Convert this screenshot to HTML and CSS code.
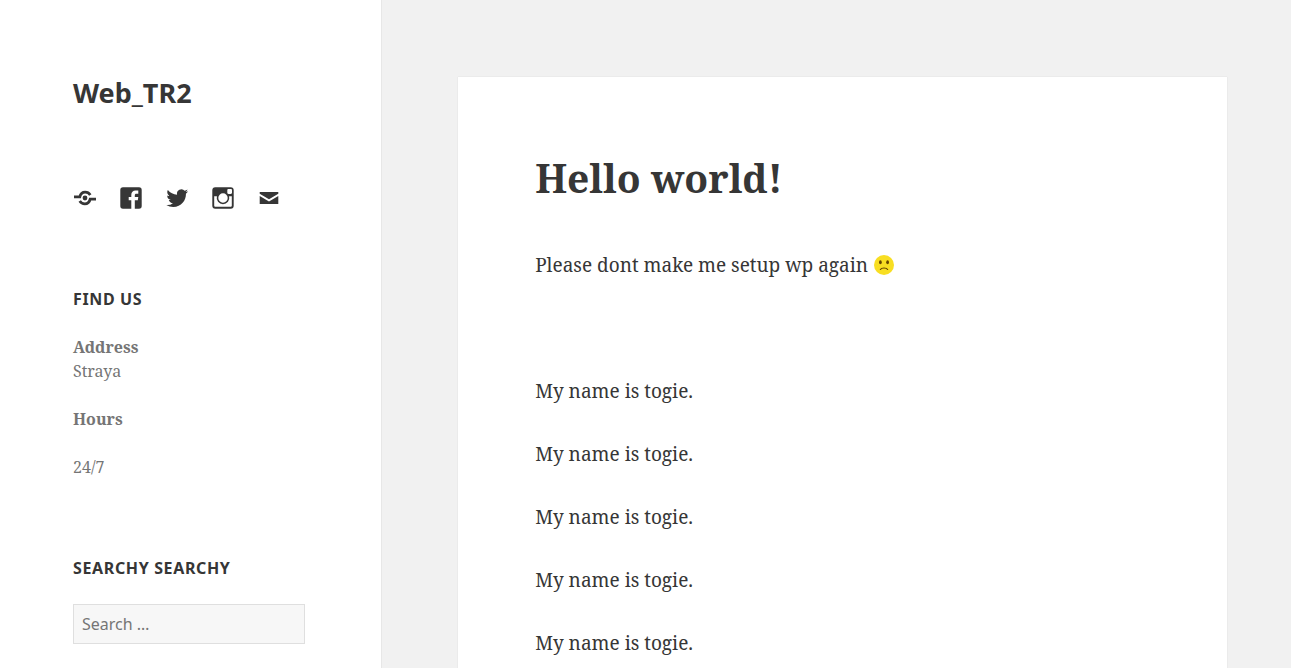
FILE: index.html
```html
<!DOCTYPE html>
<html lang="en">
<head>
<meta charset="utf-8">
<meta name="viewport" content="width=device-width, initial-scale=1">
<title>Web_TR2</title>
<link rel="stylesheet" href="styles.css">
</head>
<body>
<div class="site">
  <aside class="sidebar">
    <h1 class="site-title"><a href="#">Web_TR2</a></h1>
    <nav class="social" aria-label="Social links">
      <a href="#" aria-label="Website"><svg viewBox="0 0 24 24"><circle cx="12" cy="12" r="2.400"/><path d="M1 10.900h5.800C7.500 8 9.600 6.200 12.200 6.200c2.200 0 3.900 1 5.100 2.800M23 13.100h-5.800c-.7 2.900-2.800 4.700-5.400 4.700-2.200 0-3.900-1-5.100-2.800" fill="none" stroke="#363636" stroke-width="2.800"/></svg></a>
      <a href="#" aria-label="Facebook"><svg viewBox="0 0 24 24"><path d="M20 1.300H4A2.700 2.700 0 0 0 1.300 4v16A2.700 2.700 0 0 0 4 22.700h8.300v-8.400H9.700v-3.200h2.600V9c0-2.900 1.600-4.500 4.300-4.500h2.700v3.200h-1.800c-1.300 0-1.700.6-1.700 1.700v1.700h3.500l-.5 3.200h-3v8.400H20a2.700 2.700 0 0 0 2.700-2.700V4A2.700 2.700 0 0 0 20 1.300z"/></svg></a>
      <a href="#" aria-label="Twitter"><svg viewBox="1 1 22 22"><path d="M22.230 5.924a8.212 8.212 0 0 1-2.357.646 4.115 4.115 0 0 0 1.804-2.270 8.221 8.221 0 0 1-2.606.996 4.103 4.103 0 0 0-6.991 3.742 11.647 11.647 0 0 1-8.457-4.287 4.087 4.087 0 0 0-.556 2.063 4.100 4.100 0 0 0 1.825 3.415 4.090 4.090 0 0 1-1.859-.513v.052a4.104 4.104 0 0 0 3.292 4.023 4.099 4.099 0 0 1-1.853.070 4.110 4.110 0 0 0 3.833 2.850 8.236 8.236 0 0 1-5.096 1.756c-.331 0-.658-.019-.979-.057a11.617 11.617 0 0 0 6.290 1.843c7.547 0 11.675-6.252 11.675-11.675 0-.178-.004-.355-.012-.531a8.330 8.330 0 0 0 2.047-2.123z"/></svg></a>
      <a href="#" aria-label="Instagram"><svg viewBox="0 0 24 24"><path fill-rule="evenodd" d="M4.300 1.300h15.400a3 3 0 0 1 3 3v15.400a3 3 0 0 1-3 3H4.300a3 3 0 0 1-3-3V4.300a3 3 0 0 1 3-3zM3.200 10.300v9.200c0 .8.500 1.300 1.300 1.300h15c.8 0 1.300-.5 1.300-1.300v-9.200h-2.700a6.300 6.300 0 1 1-12.200 0zM17.500 3c-.7 0-1.200.5-1.200 1.200v2.600c0 .7.500 1.200 1.200 1.200h2.300c.7 0 1.200-.5 1.200-1.200V4.200c0-.7-.5-1.200-1.200-1.200zM12 7.300a4.700 4.700 0 1 0 0 9.400 4.700 4.700 0 0 0 0-9.400z"/></svg></a>
      <a href="#" aria-label="Email"><svg viewBox="0 0 24 24"><path d="M2.700 6h18.600v1.800L12 13.300 2.700 7.800zM2.700 10v8h18.600v-8L12 15.500z"/></svg></a>
    </nav>
    <section class="widget">
      <h2 class="widget-title">Find Us</h2>
      <p><strong>Address</strong><br>Straya</p>
      <p><strong>Hours</strong></p>
      <p>24/7</p>
    </section>
    <section class="widget">
      <h2 class="widget-title">Searchy Searchy</h2>
      <form role="search"><input class="search" type="search" placeholder="Search …" aria-label="Search for"></form>
    </section>
  </aside>
  <main class="content">
    <article class="post">
      <h1 class="post-title">Hello world!</h1>
      <p>Please dont make me setup wp again <svg class="emoji" viewBox="0 0 36 36" role="img" aria-label="Frowning face"><circle cx="18" cy="18" r="18" fill="#f8de22"/><ellipse cx="11.500" cy="13" rx="2.500" ry="3.600" fill="#664500"/><ellipse cx="24.500" cy="13" rx="2.500" ry="3.600" fill="#664500"/><path d="M11.500 26C13.500 22.500 22.500 22.500 24.500 26" fill="none" stroke="#664500" stroke-width="2.200" stroke-linecap="round"/></svg></p>
      <p>&nbsp;</p>
      <p>My name is togie.</p>
      <p>My name is togie.</p>
      <p>My name is togie.</p>
      <p>My name is togie.</p>
      <p>My name is togie.</p>
    </article>
  </main>
</div>
</body>
</html>
```
FILE: styles.css
```css
* { box-sizing: border-box; }
body {
  margin: 0;
  background: #f1f1f1;
  color: #363636;
  font-family: "Noto Serif", "Droid Serif", "Liberation Serif", serif;
}
h1, h2, p { margin: 0; }
a { color: inherit; text-decoration: none; }
.site {
  display: grid;
  grid-template-columns: 29.6% 1fr;
  height: 100vh;
  overflow: hidden;
}
.sidebar {
  background: #fff;
  border-right: 1px solid #e7e7e7;
  padding: 76px 20% 0 73px;
}
.site-title {
  font: 700 27px/34px "Noto Sans", sans-serif;
}
.social {
  display: flex;
  gap: 22px;
  margin-top: 76px;
}
.social a { display: block; height: 24px; }
.social svg { display: block; width: 24px; height: 24px; fill: #363636; }
.widget {
  margin-top: 77px;
  color: #757575;
  font-size: 16px;
  line-height: 24px;
}
.widget p + p { margin-top: 24px; }
.widget-title {
  margin-bottom: 24px;
  color: #363636;
  font: 700 16px/24px "Noto Sans", sans-serif;
  letter-spacing: 0.04em;
  text-transform: uppercase;
}
.search {
  display: block;
  width: 100%;
  height: 40px;
  padding: 0 8px;
  border: 1px solid #dfdfdf;
  border-radius: 0;
  background: #f7f7f7;
  color: #757575;
  font: 16px/24px "Noto Sans", sans-serif;
  appearance: none;
}
.search::placeholder { color: #757575; opacity: 1; }
.content { padding: 77px 7% 0 76px; }
.post {
  min-height: 100%;
  padding: 76px 77px;
  background: #fff;
  box-shadow: 0 0 1px rgba(0, 0, 0, 0.15);
  font-size: 19px;
  line-height: 32px;
}
.post p { margin-bottom: 31px; }
.post-title {
  margin-bottom: 47px;
  font-size: 39px;
  line-height: 49px;
}
.emoji { width: 20px; height: 20px; margin-left: 1px; vertical-align: -3px; }
```
